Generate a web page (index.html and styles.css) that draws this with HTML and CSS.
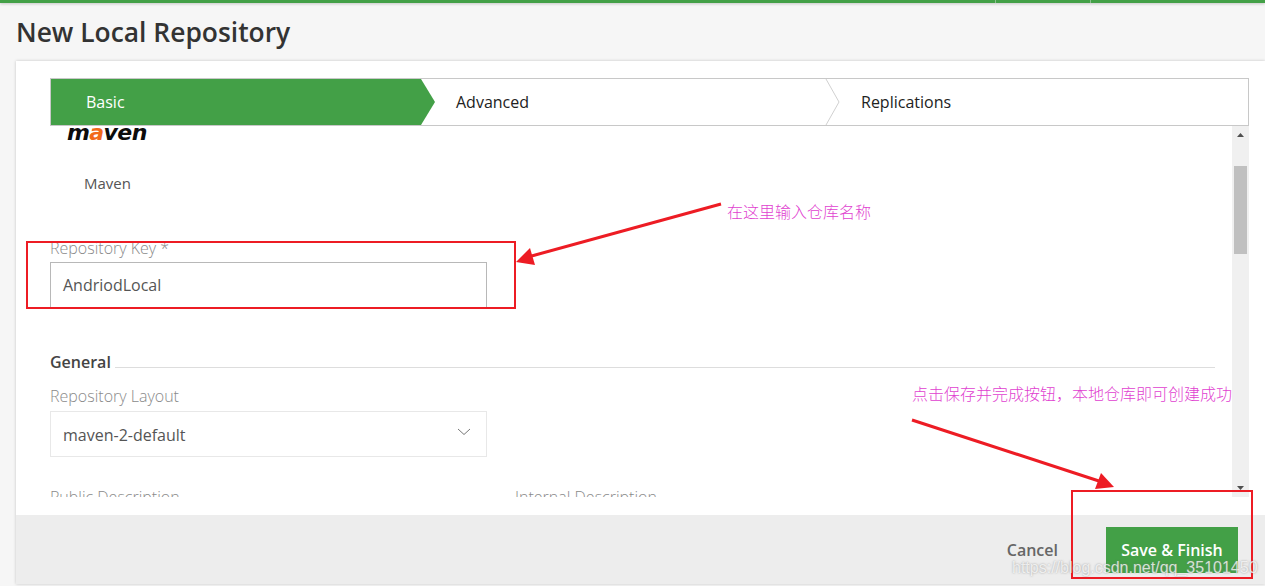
FILE: index.html
```html
<!DOCTYPE html>
<html lang="en">
<head>
<meta charset="utf-8">
<title>New Local Repository</title>
<link rel="stylesheet" href="styles.css">
</head>
<body>
<div class="topbar"><span class="topbar-sep first"></span><span class="topbar-sep second"></span></div>
<header class="page-head"><h1 class="page-title">New Local Repository</h1></header>
<main class="card">
  <div class="card-main">
    <nav class="steps">
      <div class="step step-basic">Basic</div>
      <div class="step step-advanced">Advanced
        <svg class="chevron" width="15" height="46" viewBox="0 0 15 46"><path d="M1 0L14 23L1 46" fill="none" stroke="#d0d0d0" stroke-width="1"/></svg>
      </div>
      <div class="step step-replications">Replications</div>
    </nav>
    <div class="pane">
      <div class="form">
        <div class="logo">m<span class="logo-a">a</span>ven</div>
        <div class="package-name">Maven</div>
        <label class="field-label key-label">Repository Key *</label>
        <div class="input">AndriodLocal</div>
        <div class="section"><span class="section-title">General</span><span class="section-line"></span></div>
        <label class="field-label layout-label">Repository Layout</label>
        <div class="select">maven-2-default
          <svg class="select-arrow" width="14" height="8" viewBox="0 0 14 8"><path d="M1 1L7 6.500L13 1" fill="none" stroke="#777" stroke-width="1"/></svg>
        </div>
        <div class="desc-row">
          <label class="field-label desc-public">Public Description</label>
          <label class="field-label">Internal Description</label>
        </div>
      </div>
      <div class="scrollbar">
        <svg class="scroll-btn" width="17" height="17" viewBox="0 0 17 17"><path d="M5 11L8.500 7L12 11Z" fill="#505050"/></svg>
        <div class="scroll-track"><div class="scroll-thumb"></div></div>
        <svg class="scroll-btn" width="17" height="17" viewBox="0 0 17 17"><path d="M5 6L8.500 10L12 6Z" fill="#505050"/></svg>
      </div>
    </div>
  </div>
  <footer class="card-foot">
    <span class="cancel">Cancel</span>
    <button class="save" type="button">Save &amp; Finish</button>
  </footer>
</main>

<svg class="marks" width="1265" height="586" viewBox="0 0 1265 586">
  <rect x="27" y="242" width="488" height="66" fill="none" stroke="#ed1c24" stroke-width="2"/>
  <rect x="1072" y="491" width="180" height="87" fill="none" stroke="#ed1c24" stroke-width="2"/>
  <path d="M721 204L528 257" fill="none" stroke="#ed1c24" stroke-width="3"/>
  <path d="M516 262L530 248L535 265Z" fill="#ed1c24"/>
  <path d="M912 420L1102 482" fill="none" stroke="#ed1c24" stroke-width="3"/>
  <path d="M1114 487L1101 473L1095 489Z" fill="#ed1c24"/>
</svg>
<div class="note note-key">在这里输入仓库名称</div>
<div class="note note-save">点击保存并完成按钮&#xFF0C;本地仓库即可创建成功</div>
<div class="watermark">https://blog.csdn.net/qq_35101450</div>
</body>
</html>
```
FILE: styles.css
```css
* { box-sizing: border-box; }
html, body { margin: 0; height: 100%; overflow: hidden; }
body {
  position: relative;
  background: #f6f6f6;
  font-family: "Open Sans", sans-serif;
  color: #555;
}
.topbar {
  position: relative;
  height: 3px;
  background: #43a047;
  box-shadow: 0 1px 3px rgba(0,0,0,.2);
}
.topbar-sep { position: absolute; top: 0; width: 1px; height: 3px; background: #8cc08f; }
.topbar-sep.first { left: 995px; }
.topbar-sep.second { left: 1090px; }
.page-head { height: 58px; display: flex; align-items: center; padding: 0 0 0 16px; }
.page-title { margin: 0 0 1px; font-size: 26.4px; font-weight: 600; color: #333; line-height: 36px; }
.card {
  margin-left: 16px;
  height: 523px;
  background: #fff;
  box-shadow: 0 0 3px rgba(0,0,0,.2);
  display: flex;
  flex-direction: column;
}
.card-main { flex: 1; min-height: 0; padding: 17px 16px 0 34px; }
.steps {
  height: 48px;
  display: flex;
  border: 1px solid #c8c8c8;
  background: #fff;
  font-size: 16px;
  line-height: 46px;
  color: #222;
}
.step { position: relative; height: 46px; }
.step-basic {
  width: 384px;
  padding-left: 35px;
  margin-right: -14px;
  color: #fff;
  background: #43a047;
  clip-path: polygon(0 0, 370px 0, 384px 50%, 370px 100%, 0 100%);
  z-index: 1;
}
.step-advanced { width: 405px; padding-left: 35px; }
.step-replications { flex: 1; padding-left: 35px; }
.chevron { position: absolute; right: -14px; top: 0; }
.pane { display: flex; height: 371px; }
.form { flex: 1; min-width: 0; overflow: hidden; padding-right: 17px; }
.logo {
  margin: -3px 0 0 17px;
  height: 20px;
  font-family: "DejaVu Sans", sans-serif;
  font-size: 22px;
  font-weight: 700;
  font-style: italic;
  letter-spacing: -0.6px;
  line-height: 20px;
  color: #0c0c0c;
}
.logo-a { color: #f26a1b; }
.package-name { margin: 30px 0 0 34px; font-size: 15px; line-height: 20px; color: #555; }
.field-label { display: block; font-size: 16px; font-weight: 300; line-height: 20px; color: #8a8a8a; }
.key-label { margin-top: 45px; height: 24px; }
.input {
  width: 437px;
  height: 46px;
  border: 1px solid #b8b8b8;
  padding-left: 12px;
  font-size: 16px;
  line-height: 44px;
  color: #555;
}
.section { display: flex; align-items: center; margin-top: 44px; height: 20px; }
.section-title { font-size: 16px; font-weight: 600; color: #444; }
.section-line { flex: 1; margin: 10px 0 0 4px; height: 1px; background: #ddd; }
.layout-label { margin-top: 14px; height: 25px; }
.select {
  position: relative;
  width: 437px;
  height: 46px;
  border: 1px solid #e8e8e8;
  padding-left: 12px;
  font-size: 16px;
  line-height: 46px;
  color: #555;
}
.select-arrow { position: absolute; right: 15px; top: 16px; }
.desc-row { display: flex; margin-top: 30px; }
.desc-public { width: 465px; }
.scrollbar { width: 17px; background: #f0f0f0; display: flex; flex-direction: column; }
.scroll-btn { display: block; flex: none; }
.scroll-track { flex: 1; padding: 23px 2px 0; }
.scroll-thumb { height: 88px; background: #c0c0c0; }
.card-foot {
  height: 69px;
  background: #ededed;
  display: flex;
  align-items: center;
  justify-content: flex-end;
  padding: 0 27px 0 0;
}
.cancel { font-size: 16px; font-weight: 600; color: #666; margin-right: 48px; }
.save {
  width: 132px;
  height: 46px;
  border: 0;
  background: #43a047;
  color: #fff;
  font: 600 16px "Open Sans", sans-serif;
}
.marks { position: absolute; left: 0; top: 0; pointer-events: none; }
.note {
  position: absolute;
  font-family: "Noto Sans CJK SC", sans-serif;
  font-size: 16px;
  font-weight: 300;
  line-height: 20px;
  color: #df3fd0;
  white-space: nowrap;
}
.note-key { left: 727px; top: 201px; }
.note-save { left: 912px; top: 383px; }
.watermark {
  position: absolute;
  left: 1012px;
  top: 557px;
  font-family: "Liberation Sans", sans-serif;
  font-size: 16px;
  line-height: 22px;
  color: rgba(255,255,255,.75);
  text-shadow: 0 0 2px rgba(120,120,120,.7);
  white-space: nowrap;
}
```
